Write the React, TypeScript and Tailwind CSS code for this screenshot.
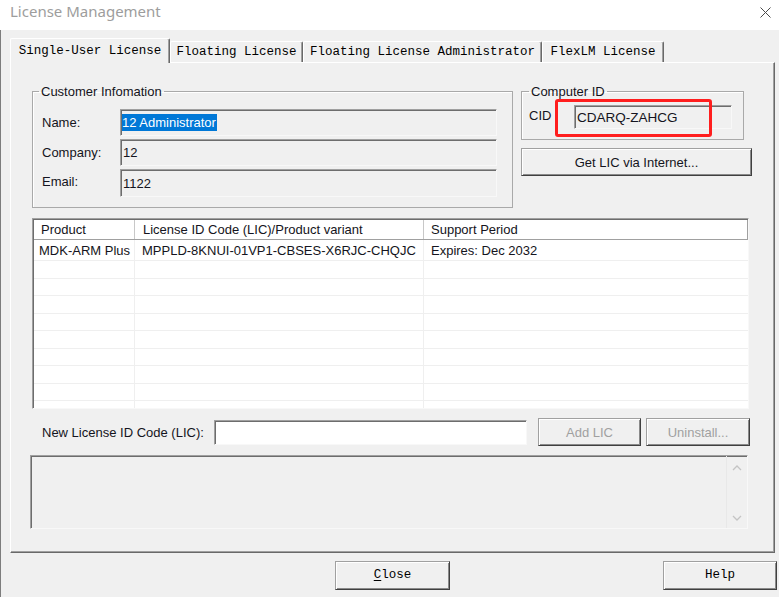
const raised =
  "border border-[#a0a0a0] border-r-[#404040] border-b-[#404040] shadow-[inset_1px_1px_0_#fff,inset_-1px_-1px_0_#8a8a8a] bg-[#f0f0f0]"
const sunken =
  "border border-[#a0a0a0] border-r-[#f8f8f8] border-b-[#f8f8f8] shadow-[inset_1px_1px_0_#6d6d6d]"
const mono = "font-['Liberation_Mono','Courier_New',monospace]"

function Tab({ label, w, active }: { label: string; w: string; active?: boolean }) {
  return (
    <div
      className={`${w} ${
        active ? "h-[25px] -mb-px relative z-10 bg-[#f0f0f0]" : "h-[21px] pt-[1px]"
      } flex items-center justify-center border-t border-l border-white border-r border-r-[#696969] shadow-[inset_-1px_0_0_#a0a0a0] rounded-t-[2px] text-[12.5px] text-black ${mono}`}
    >
      {label}
    </div>
  )
}

export default function App() {
  return (
    <div className="w-[779px] h-[597px] bg-[#f0f0f0] overflow-hidden font-['Liberation_Sans',Arial,sans-serif] text-[13px] leading-[15px] text-[#141420]">
      {/* Barre de titre */}
      <div className="h-[30px] bg-white flex items-start justify-between">
        <span className="pl-[10px] text-[15px] leading-[22px] text-[#9d9d9d] font-['Noto_Sans',sans-serif]">
          License Management
        </span>
        <svg className="mt-[7px] mr-[8px]" width="11" height="11" viewBox="0 0 11 11">
          <path d="M0.5 0.5L10.5 10.5M10.5 0.5L0.5 10.5" stroke="#4a4a4a" strokeWidth="1" />
        </svg>
      </div>

      <div className="h-[567px] border-l border-[#7d7d7d]">
        {/* Onglets */}
        <div className="flex items-end h-[32px] pl-[9px]">
          <Tab label="Single-User License" w="w-[160px]" active />
          <Tab label="Floating License" w="w-[133px]" />
          <Tab label="Floating License Administrator" w="w-[239px]" />
          <Tab label="FlexLM License" w="w-[122px]" />
        </div>

        {/* Panneau */}
        <div className="ml-[9px] w-[765px] h-[491px] border border-white border-r-[#696969] border-b-[#696969] shadow-[inset_-1px_-1px_0_#a0a0a0] pl-[21px] pt-[21px]">
          <div className="flex">
            {/* Customer Information */}
            <fieldset className="w-[481px] h-[124px] border border-[#a9a9a9] shadow-[inset_1px_1px_0_#fff]">
              <legend className="ml-[6px] px-[2px] leading-[15px]">Customer Infomation</legend>
              <div className="mt-[10px] flex flex-col gap-[3px]">
                <div className="flex items-center">
                  <span className="w-[87px] pl-[9px]">Name:</span>
                  <div className={`w-[377px] h-[27px] ${sunken} flex items-center pl-[1px]`}>
                    <span className="bg-[#0078d7] text-white leading-[17px] pr-[1px]">12 Administrator</span>
                  </div>
                </div>
                <div className="flex items-center">
                  <span className="w-[87px] pl-[9px]">Company:</span>
                  <div className={`w-[377px] h-[27px] ${sunken} flex items-center pl-[2px]`}>12</div>
                </div>
                <div className="flex items-center">
                  <span className="w-[87px] pl-[9px] -mt-[4px]">Email:</span>
                  <div className={`w-[377px] h-[28px] ${sunken} flex items-center pl-[2px]`}>1122</div>
                </div>
              </div>
            </fieldset>

            {/* Computer ID */}
            <div className="ml-[8px] flex flex-col">
              <fieldset className="relative w-[223px] h-[56px] border border-[#a9a9a9] shadow-[inset_1px_1px_0_#fff]">
                <legend className="ml-[7px] px-[2px] leading-[15px]">Computer ID</legend>
                <div className="mt-[6px] flex items-center">
                  <span className="w-[52px] pl-[7px] -mt-[3px]">CID</span>
                  <div className={`w-[158px] h-[24px] ${sunken} flex items-center pl-[2px] text-[13.5px]`}>
                    CDARQ-ZAHCG
                  </div>
                </div>
                <div className="absolute left-[33px] top-[0px] w-[157px] h-[38px] border-[3px] border-[#ff1e1e] rounded-[3px]" />
              </fieldset>
              <button className={`mt-[8px] w-[231px] h-[28px] ${raised} text-[13px]`}>Get LIC via Internet...</button>
            </div>
          </div>

          {/* Liste des licences */}
          <div className={`mt-[10px] w-[717px] h-[191px] ${sunken} bg-white overflow-hidden`}>
            <div className="flex h-[20px] border-b border-[#a0a0a0] ml-px mt-px">
              <div className="w-[101px] border-r border-[#c8c8c8] pl-[7px] flex items-center">Product</div>
              <div className="w-[289px] border-r border-[#c8c8c8] pl-[8px] flex items-center">
                License ID Code (LIC)/Product variant
              </div>
              <div className="w-[324px] border-r border-[#a0a0a0] pl-[7px] flex items-center">Support Period</div>
            </div>
            <div className="flex h-[21px] border-b border-[#efefef] ml-px">
              <div className="w-[101px] border-r border-[#efefef] pl-[5px] flex items-center">MDK-ARM Plus</div>
              <div className="w-[289px] border-r border-[#efefef] pl-[7px] flex items-center">
                MPPLD-8KNUI-01VP1-CBSES-X6RJC-CHQJC
              </div>
              <div className="flex-1 pl-[7px] flex items-center">Expires: Dec 2032</div>
            </div>
            {Array.from({ length: 9 }).map((_, i) => (
              <div key={i} className="flex h-[17.5px] border-b border-[#efefef] ml-px">
                <div className="w-[101px] border-r border-[#efefef]" />
                <div className="w-[289px] border-r border-[#efefef]" />
                <div className="flex-1" />
              </div>
            ))}
          </div>

          {/* Nouvelle licence */}
          <div className="mt-[9px] flex items-center h-[28px]">
            <span className="w-[182px] pl-[10px]">New License ID Code (LIC):</span>
            <div className={`w-[313px] h-[25px] ${sunken} bg-white`} />
            <button className={`ml-[11px] w-[103px] h-[28px] ${raised} text-[#a0a0a0]`}>Add LIC</button>
            <button className={`ml-[5px] w-[104px] h-[28px] ${raised} text-[#a0a0a0]`}>Uninstall...</button>
          </div>

          {/* Zone de messages */}
          <div className={`mt-[9px] -ml-[2px] w-[718px] h-[74px] ${sunken} bg-[#f0f0f0] flex justify-end`}>
            <div className="w-[21px] border-l border-[#e8e8e8] flex flex-col items-center justify-between pt-[9px] pb-[7px]">
              <svg width="10" height="6" viewBox="0 0 10 6">
                <path d="M1 5L5 1L9 5" stroke="#c4c4c4" strokeWidth="1.3" fill="none" />
              </svg>
              <svg width="10" height="6" viewBox="0 0 10 6">
                <path d="M1 1L5 5L9 1" stroke="#c4c4c4" strokeWidth="1.3" fill="none" />
              </svg>
            </div>
          </div>
        </div>

        {/* Boutons du bas */}
        <div className="mt-[8px] flex">
          <button className={`ml-[334px] w-[115px] h-[29px] ${raised} ${mono} text-[12.5px] text-black`}>
            <span className="underline underline-offset-2">C</span>lose
          </button>
          <button className={`ml-[213px] w-[114px] h-[29px] ${raised} ${mono} text-[12.5px] text-black`}>Help</button>
        </div>
      </div>
    </div>
  )
}
